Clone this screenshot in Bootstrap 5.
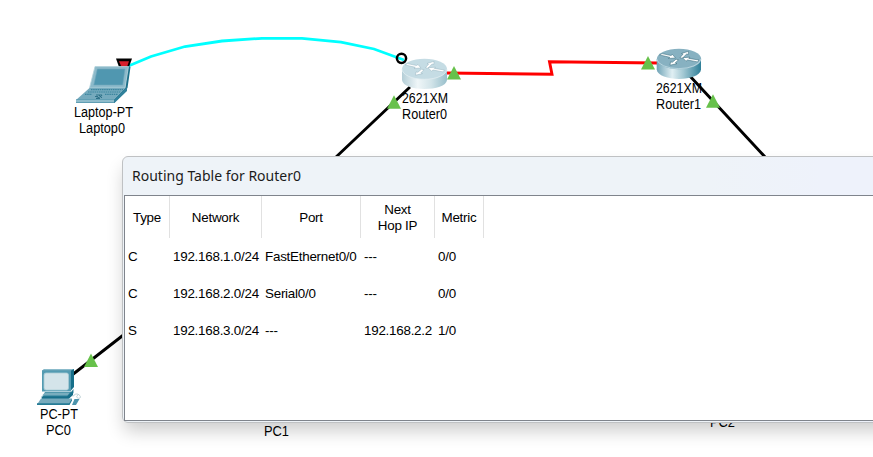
<!DOCTYPE html>
<html lang="en">
<head>
<meta charset="utf-8">
<meta name="viewport" content="width=device-width, initial-scale=1">
<title>Routing Table for Router0</title>
<link href="https://cdn.jsdelivr.net/npm/bootstrap@5.3.0/dist/css/bootstrap.min.css" rel="stylesheet">
<style>
body{font-family:"Liberation Sans",Arial,sans-serif;font-size:13.4px;letter-spacing:-.25px;line-height:16px;color:#000;background:#fff}
.workspace{width:873px;height:457px}
.topology{left:0;top:0}
.topology text{font-size:14px;letter-spacing:0;fill:#000}
.route-window{left:122px;top:156px;width:780px;height:267px;border:1px solid #bfc1c3;border-radius:6px;background:linear-gradient(90deg,#eef3f8 75%,#eef2fb 90%);box-shadow:0 10px 18px -2px rgba(0,0,0,.2);padding:0 1px 1px}
.titlebar{height:38px;padding-left:8px;font-family:"Noto Sans","Open Sans",sans-serif;font-size:14px;color:#1b1b1b}
.titlebar span{letter-spacing:0}
.pane{height:226px;border:1px solid #7f848c;background:#fff}
.route-table{width:359px;table-layout:fixed;border-collapse:separate;border-spacing:0}
.route-table th{height:42px;padding:2px 0 0;font-weight:400;text-align:center;vertical-align:middle;border-right:1px solid #e1e1e1}
.route-table td{height:37px;padding:0 0 0 3px;vertical-align:middle;white-space:nowrap}
</style>
<script src="https://cdn.jsdelivr.net/npm/bootstrap@5.3.0/dist/js/bootstrap.bundle.min.js"></script>
</head>
<body class="m-0 overflow-hidden">
<main class="workspace position-relative overflow-hidden">
<svg class="topology position-absolute" width="873" height="457" viewBox="0 0 873 457">
<defs>
<linearGradient id="sideB"><stop offset="0" stop-color="#6fa3b6"/><stop offset=".35" stop-color="#e0eff3"/><stop offset=".6" stop-color="#a2c8d3"/><stop offset="1" stop-color="#2f7f98"/></linearGradient>
<linearGradient id="sideA"><stop offset="0" stop-color="#b4ced7"/><stop offset=".35" stop-color="#eff6f8"/><stop offset=".65" stop-color="#d2e4e9"/><stop offset="1" stop-color="#98bfcb"/></linearGradient>
<path id="tri" d="M0-7 7 6.500H-7z" fill="#67c14b"/>
<g id="arrows" fill="#fff" stroke-width=".5"><path d="M-19.500-4.300-17-5.600-8-3.700-6.500-4.700-3.500-1.200-10.500-.7-9.200-1.900zM1-1.600 4-5 2.500-5.700 9.500-7.900 9.300-4.700 7.600-5.100 3.200-.8zM18.500 2.700 8.500.8 7 2 3.500-1.500 11-2 9.800-.8 20 .8z"/><path d="M-.5.500-3.700 3.700-2 4.400-9 6-8.500 2.700-6.700 3.100-3 0z"/></g>
</defs>

<g fill="none">
<path d="M126 67 151 56.500 185 46.500 222 41 262 38.300H302L341 42.200 374 49 404 60" stroke="#00ffff" stroke-width="2.800"/>
<path d="M446 73 552 74.300 549.500 61.800 658 63" stroke="#f00" stroke-width="2.900"/>
<path d="M410 87 335 158M688 74 766 158M72 375 126 333" stroke="#000" stroke-width="2.900"/>
</g>
<g>
<path d="M402 69V80C403 92 446 92 447 80V69z" fill="url(#sideA)"/>
<ellipse cx="424.500" cy="69" rx="22.500" ry="10.300" fill="#c5dce4"/>
<path d="M402 69A22.500 10.300 0 0 0 447 69" fill="none" stroke="#e2edf1" stroke-width=".8"/>
<use href="#arrows" x="424.500" y="69.200" stroke="#94b3bf"/>
</g>
<g>
<path d="M656.700 59V69.500C658 82 700 82 701 69.500V59z" fill="url(#sideB)"/>
<ellipse cx="679" cy="59" rx="22.200" ry="10.300" fill="#87b1c1"/>
<path d="M656.700 59A22.200 10.300 0 0 0 701 59" fill="none" stroke="#c2dce4" stroke-width=".8"/>
<use href="#arrows" x="679" y="59.200" stroke="#2d6275"/>
</g>
<circle cx="401.500" cy="58.300" r="4.600" fill="none" stroke="#000" stroke-width="2.500"/>

<path d="M116 58.500H132L129 67H119z" fill="#000"/>
<path d="M119 61.200H129L127 67H121.500z" fill="#d8202c"/>
<g>
<path d="M128 66 130.500 67 127.500 88 114.500 102.500H111.500L125 88z" fill="#1c6f89"/>
<path d="M95 66.500H128.500L125 88H89.500z" fill="#8dbaca" stroke="#b4d3dc" stroke-width=".8"/>
<path d="M97.300 69H125L122.700 85H93.800z" fill="#5097b0" stroke="#6fa8bd" stroke-width=".6"/>
<path d="M89.500 88H125.500L113.500 100H76z" fill="#75aabd"/>
<path d="M76 99.500H114L127 87V91L114.500 103H76z" fill="#31819b"/>
<path d="M76 99.800H114V102.500H76z" fill="#8fbccb"/>
<path d="M91 89.700H123M88 92H121M85 94.300H92M105 94.300H118" stroke="#3b859e" stroke-width="1.200" stroke-dasharray="1.500 .7"/>
<path d="M96 95H102L101 96.500 96 98.500H100M95 96.500H98M99 95 102 98" fill="none" stroke="#286d85" stroke-width=".9"/>
</g>
<g>
<path d="M42 370.500 45 369H74V387L70.500 391z" fill="#176f8a"/>
<path d="M42 370.500H71V391.500H42z" fill="#539bb2"/>
<path d="M42 370.500 44.500 369H74L71 370.500z" fill="#8bbbcb"/>
<rect x="44" y="373" width="24.500" height="17" rx="2" fill="#d4e4ea" stroke="#a9cbd6" stroke-width=".8"/>
<path d="M45 392H71L73.500 389V393L69 398H42z" fill="#2d819b"/>
<path d="M45 392.500H70L67.500 395.500H42z" fill="#78adbe"/>
<path d="M41.500 396.500H67L73 391V395L68 399.500H42z" fill="#176f8a"/>
<path d="M41 398.500H72L68.500 404.500H37z" fill="#76aabc"/>
<path d="M37 403.200H69L72 398.500V400.500L69.500 405H37z" fill="#257b95"/>
<path d="M74.500 399H79.500L76 405H72z" fill="#4c94ac"/>
<path d="M73 396.500C76 391 82 396 80 398 78 399 75 397 78 395" fill="none" stroke="#bdd0d6" stroke-width="1"/>
</g>

<g>
<text x="74" y="117" textLength="59" lengthAdjust="spacingAndGlyphs">Laptop-PT</text>
<text x="79" y="133" textLength="46" lengthAdjust="spacingAndGlyphs">Laptop0</text>
<text x="402" y="103" textLength="46" lengthAdjust="spacingAndGlyphs">2621XM</text>
<text x="402" y="119" textLength="45" lengthAdjust="spacingAndGlyphs">Router0</text>
<text x="656" y="93" textLength="46" lengthAdjust="spacingAndGlyphs">2621XM</text>
<text x="656" y="109" textLength="45" lengthAdjust="spacingAndGlyphs">Router1</text>
<text x="40" y="419" textLength="38" lengthAdjust="spacingAndGlyphs">PC-PT</text>
<text x="46" y="435" textLength="25" lengthAdjust="spacingAndGlyphs">PC0</text>
<text x="264" y="436" textLength="25" lengthAdjust="spacingAndGlyphs">PC1</text>
<text x="710" y="427" textLength="25" lengthAdjust="spacingAndGlyphs">PC2</text>
</g>
<use href="#tri" x="454" y="73"/><use href="#tri" x="394" y="102.300"/><use href="#tri" x="648" y="63"/><use href="#tri" x="713" y="101.300"/><use href="#tri" x="91" y="360.500"/>
</svg>

<section class="route-window position-absolute">
<header class="titlebar d-flex align-items-center"><span>Routing Table for Router0</span></header>
<div class="pane">
<table class="route-table">
<colgroup><col style="width:45px"><col style="width:92px"><col style="width:99px"><col style="width:74px"><col style="width:49px"></colgroup>
<thead><tr><th>Type</th><th>Network</th><th>Port</th><th>Next<br>Hop IP</th><th>Metric</th></tr></thead>
<tbody>
<tr><td>C</td><td>192.168.1.0/24</td><td>FastEthernet0/0</td><td>---</td><td>0/0</td></tr>
<tr><td>C</td><td>192.168.2.0/24</td><td>Serial0/0</td><td>---</td><td>0/0</td></tr>
<tr><td>S</td><td>192.168.3.0/24</td><td>---</td><td>192.168.2.2</td><td>1/0</td></tr>
</tbody>
</table>
</div>
</section>
</main>
</body>
</html>
